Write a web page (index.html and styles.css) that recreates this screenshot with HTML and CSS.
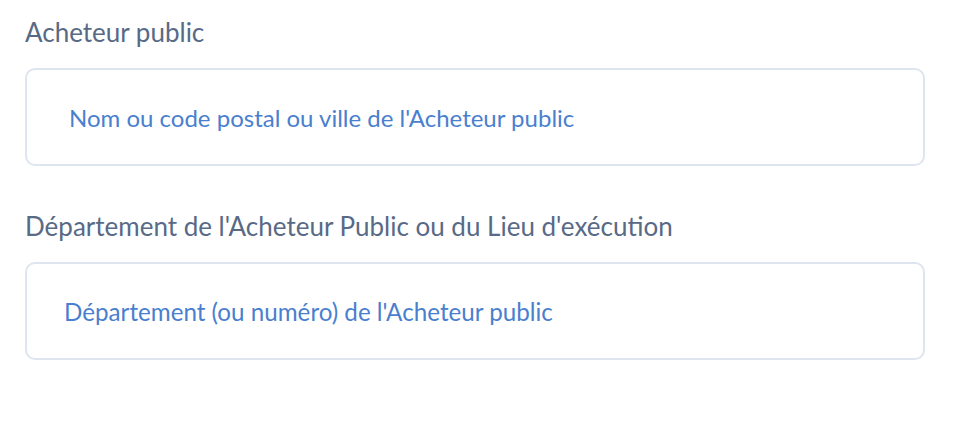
FILE: index.html
```html
<!DOCTYPE html>
<html lang="fr">
<head>
    <meta charset="UTF-8">
    <meta name="viewport" content="width=device-width, initial-scale=1.0">
    <title>Recherche</title>
    <link rel="stylesheet" href="styles.css">
</head>
<body>
    <form class="search-form">
        <div class="field">
            <label class="field-label" for="buyer">Acheteur public</label>
            <input class="field-input" type="text" id="buyer" placeholder="Nom ou code postal ou ville de l'Acheteur public">
        </div>

        <div class="field">
            <label class="field-label" for="dept">Département de l'Acheteur Public ou du Lieu d'exécution</label>
            <input class="field-input field-input--narrow" type="text" id="dept" placeholder="Département (ou numéro) de l'Acheteur public">
        </div>
    </form>
</body>
</html>
```

FILE: styles.css
```css
body {
    margin: 0;
    padding: 0 55px 0 25px;
    font-family: Lato, "Open Sans", sans-serif;
    background-color: #fff;
}

.search-form {
    display: flex;
    flex-direction: column;
    gap: 42px;
    padding-top: 14px;
}

.field {
    display: flex;
    flex-direction: column;
    gap: 18px;
}

.field-label {
    font-size: 26px;
    line-height: 36px;
    color: #586a86;
}

.field-input {
    box-sizing: border-box;
    width: 900px;
    height: 98px;
    padding: 0 42px;
    border: 2px solid #dfe5ef;
    border-radius: 10px;
    font-family: inherit;
    font-size: 24px;
    color: #4a7fcf;
    outline: none;
}

.field-input--narrow {
    padding-left: 37px;
    font-size: 24.2px;
}

.field-input::placeholder {
    color: #4a7fcf;
    opacity: 1;
}
```
